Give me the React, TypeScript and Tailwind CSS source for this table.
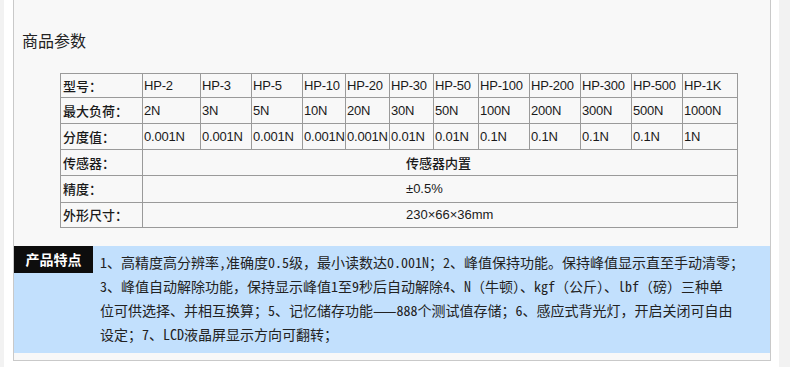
import React from "react";

const cjk = { fontFamily: '"Noto Sans CJK SC", sans-serif' };
const latin = { fontFamily: '"Liberation Sans", Arial, "Noto Sans CJK SC", sans-serif' };
const mono = { fontFamily: '"Noto Sans Mono CJK SC", "Noto Sans CJK SC", sans-serif' };

const models = ["HP-2", "HP-3", "HP-5", "HP-10", "HP-20", "HP-30", "HP-50", "HP-100", "HP-200", "HP-300", "HP-500", "HP-1K"];
const loads = ["2N", "3N", "5N", "10N", "20N", "30N", "50N", "100N", "200N", "300N", "500N", "1000N"];
const divs = ["0.001N", "0.001N", "0.001N", "0.001N", "0.001N", "0.01N", "0.01N", "0.1N", "0.1N", "0.1N", "0.1N", "1N"];

function Label({ children }: { children: React.ReactNode }) {
  return (
    <div className="border-r border-b border-[#9a9a9a] flex items-center pl-[2px] text-[13px] font-medium text-[#1a1a1a]" style={cjk}>
      {children}
    </div>
  );
}

function Cell({ children }: { children: React.ReactNode }) {
  return (
    <div className="border-r border-b border-[#9a9a9a] flex items-center pl-[1px] text-[13px] text-[#1a1a1a] whitespace-nowrap tracking-[-0.2px]" style={latin}>
      {children}
    </div>
  );
}

function Wide({ children }: { children: React.ReactNode }) {
  return (
    <div className="col-span-12 border-r border-b border-[#9a9a9a] flex items-center pl-[263px] text-[13px] text-[#1a1a1a] whitespace-nowrap" style={latin}>
      {children}
    </div>
  );
}

export default function App() {
  return (
    <div className="w-[790px] h-[367px] bg-white flex overflow-hidden">
      <div className="w-[4px] h-full bg-[#f2f2f2]" />
      <div className="w-[9px]" />
      <div className="w-[758px] h-[361px] border-l border-r border-b border-[#c9c9c9] bg-[#f8f8f8] flex flex-col">
        <div className="pt-[28px] pl-[8px] h-[53px] text-[16px] leading-[24px] text-[#222]" style={cjk}>
          商品参数
        </div>
        <div className="mt-[20px] ml-[46px] w-[678px] border-l border-t border-[#9a9a9a] grid grid-cols-[82px_58px_51px_51px_43px_44px_44px_45px_51px_51px_51px_51px_55px] grid-rows-[24px_26px_26px_26px_27px_25px]">
          <Label>型号：</Label>
          {models.map((m, i) => (
            <Cell key={"m" + i}>{m}</Cell>
          ))}
          <Label>最大负荷：</Label>
          {loads.map((m, i) => (
            <Cell key={"l" + i}>{m}</Cell>
          ))}
          <Label>分度值：</Label>
          {divs.map((m, i) => (
            <Cell key={"d" + i}>{m}</Cell>
          ))}
          <Label>传感器：</Label>
          <Wide>
            <span className="font-medium" style={cjk}>传感器内置</span>
          </Wide>
          <Label>精度：</Label>
          <Wide>±0.5%</Wide>
          <Label>外形尺寸：</Label>
          <Wide>230×66×36mm</Wide>
        </div>
        <div className="mt-[18px] h-[107px] bg-[#c2e0fd] flex">
          <div className="w-[79px] h-[27px] bg-[#0d0d0d] text-white text-[14px] font-bold flex items-center justify-center" style={cjk}>
            产品特点
          </div>
          <div className="pl-[7px] pt-[4px] text-[14px] leading-[24px] text-[#222] whitespace-nowrap" style={mono}>
            <div>1、高精度高分辨率,准确度0.5级，最小读数达0.001N；2、峰值保持功能。保持峰值显示直至手动清零；</div>
            <div>3、峰值自动解除功能，保持显示峰值1至9秒后自动解除4、N（牛顿）、kgf（公斤）、lbf（磅）三种单</div>
            <div>位可供选择、并相互换算；5、记忆储存功能——888个测试值存储；6、感应式背光灯，开启关闭可自由</div>
            <div>设定；7、LCD液晶屏显示方向可翻转；</div>
          </div>
        </div>
      </div>
      <div className="w-[8px]" />
      <div className="w-[11px] h-full bg-[#f2f2f2]" />
    </div>
  );
}
